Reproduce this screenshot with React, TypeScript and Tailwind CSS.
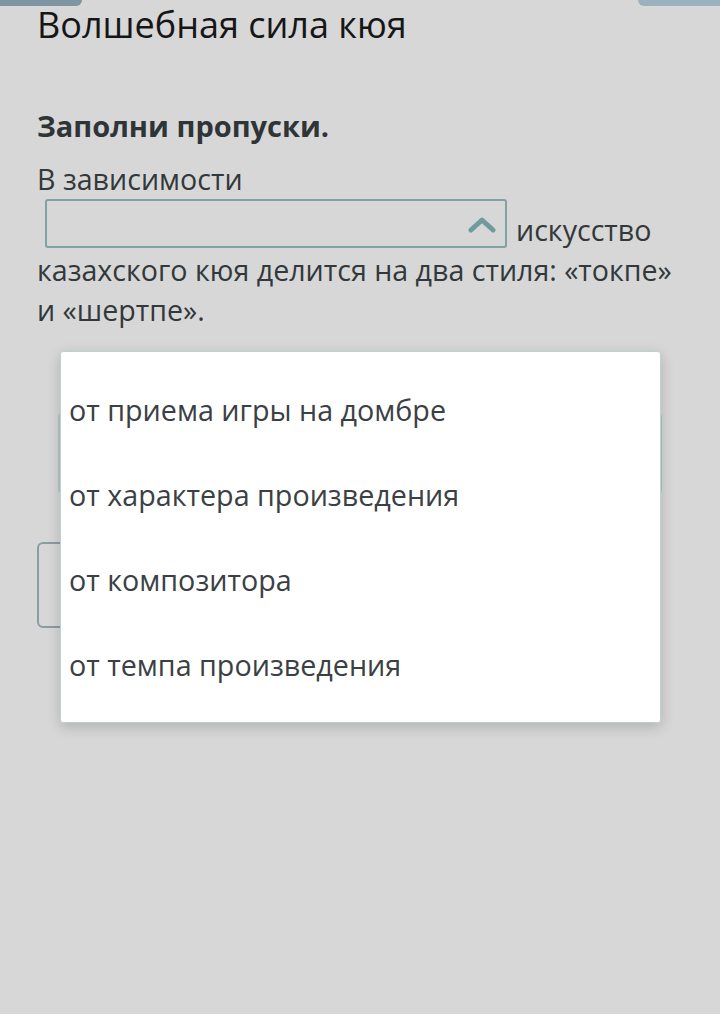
import React from 'react';

const options = [
  'от приема игры на домбре',
  'от характера произведения',
  'от композитора',
  'от темпа произведения',
];

const App: React.FC = () => {
  return (
    <div className="relative min-h-[1014px] w-full overflow-hidden bg-[#d7d7d7] font-['Open_Sans',sans-serif]">
      {/* верхние вкладки, почти скрытые */}
      <div className="flex justify-between h-[6px]">
        <div className="w-[82px] h-full bg-[#7f95a4] rounded-br-[6px]"></div>
        <div className="w-[82px] h-full bg-[#9bb1bf] rounded-bl-[6px]"></div>
      </div>

      <div className="px-[37px]">
        <h1 className="text-[36px] leading-[40px] text-[#161616] -mt-[1px]">Волшебная сила кюя</h1>

        <h2 className="mt-[63px] text-[29px] leading-[36px] font-bold text-[#2f3437]">Заполни пропуски.</h2>

        <p className="mt-[15px] text-[28.6px] leading-[40px] text-[#33383b]">
          В зависимости{' '}
          <span className="inline-block overflow-hidden align-[-7px] ml-2 mr-[9px] w-[462px] h-[49px] border-2 border-[#7fa2a2] rounded-[3px]">
            <span className="flex h-full items-center justify-end pr-[9px] pt-[3px]">
              <svg width="28" height="16" viewBox="0 0 28 16" fill="none">
                <path d="M3 13 L14 3 L25 13" stroke="#6f9b9b" strokeWidth="5" strokeLinecap="round" strokeLinejoin="round" />
              </svg>
            </span>
          </span>
          искусство казахского кюя делится на два стиля: «токпе» и «шертпе».
        </p>

        {/* элементы под выпадающим списком */}
        <div className="mt-[83px] ml-[21px] mr-[21px] h-[80px] border-x-2 border-[#b3c7c7] rounded-[4px]"></div>
        <div className="mt-[49px] w-[120px] h-[86px] border-2 border-[#8d9ca0] rounded-[6px]"></div>
      </div>

      {/* выпадающий список */}
      <div className="absolute left-[60px] top-[351px] w-[601px] h-[372px] bg-white border border-[#bcd3cf] rounded-[3px] shadow-[0_4px_14px_rgba(0,0,0,0.18)] flex flex-col justify-center">
        {options.map((o) => (
          <div key={o} className="h-[85px] flex items-center px-[8px] text-[28.7px] text-[#3b4044]">
            {o}
          </div>
        ))}
      </div>
    </div>
  );
};

export default App;
